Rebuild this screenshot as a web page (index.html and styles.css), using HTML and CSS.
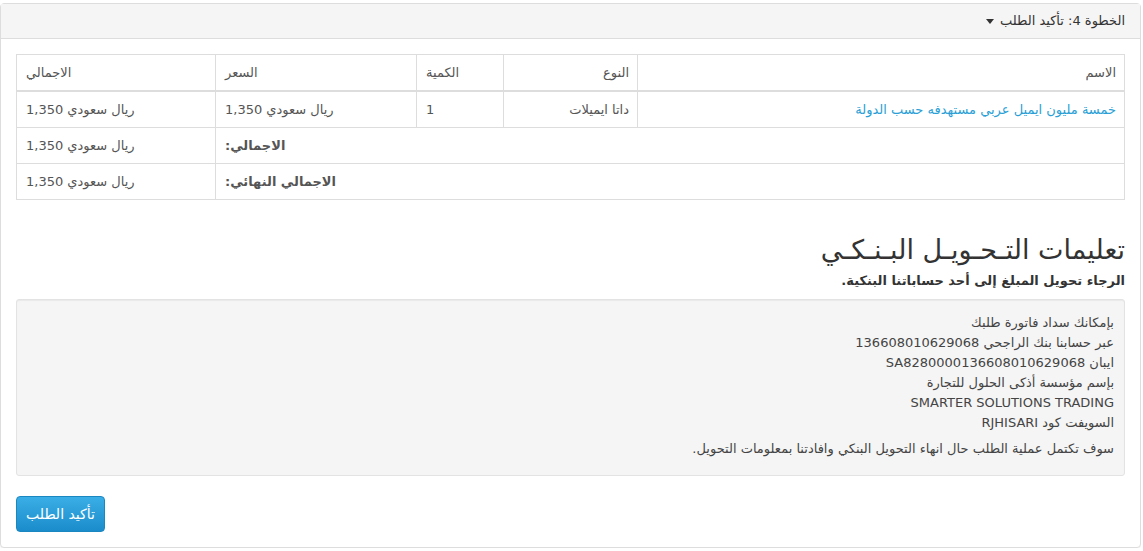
FILE: index.html
```html
<!DOCTYPE html>
<html lang="ar" dir="rtl">
<head>
    <meta charset="UTF-8">
    <meta name="viewport" content="width=device-width, initial-scale=1.0">
    <title>تأكيد الطلب</title>
    <link rel="stylesheet" href="styles.css">
</head>
<body>

    <div class="panel">
        <div class="panel-heading">
            الخطوة 4: تأكيد الطلب <span class="caret"></span>
        </div>
        <div class="panel-body">
            <table class="cart-table">
                <thead>
                    <tr>
                        <th class="col-name">الاسم</th>
                        <th class="col-type">النوع</th>
                        <th class="col-qty text-left">الكمية</th>
                        <th class="col-price text-left">السعر</th>
                        <th class="col-total text-left">الاجمالي</th>
                    </tr>
                </thead>
                <tbody>
                    <tr>
                        <td><a href="#">خمسة مليون ايميل عربي مستهدفه حسب الدولة</a></td>
                        <td>داتا ايميلات</td>
                        <td class="text-left">1</td>
                        <td class="text-left">ريال سعودي 1,350</td>
                        <td class="text-left">ريال سعودي 1,350</td>
                    </tr>
                    <tr>
                        <td colspan="4" class="text-left"><strong>الاجمالي:</strong></td>
                        <td class="text-left">ريال سعودي 1,350</td>
                    </tr>
                    <tr>
                        <td colspan="4" class="text-left"><strong>الاجمالي النهائي:</strong></td>
                        <td class="text-left">ريال سعودي 1,350</td>
                    </tr>
                </tbody>
            </table>

            <h2 class="bank-title">تعليمات التـحـويـل البـنـكـي</h2>
            <p class="bank-note">الرجاء تحويل المبلغ إلى أحد حساباتنا البنكية.</p>

            <div class="well">
                <p class="bank-lines">
                    بإمكانك سداد فاتورة طلبك<br>
                    عبر حسابنا بنك الراجحي 136608010629068<br>
                    ايبان SA8280000136608010629068<br>
                    بإسم مؤسسة أذكى الحلول للتجارة<br>
                    SMARTER SOLUTIONS TRADING<br>
                    السويفت كود RJHISARI
                </p>
                <p>سوف تكتمل عملية الطلب حال انهاء التحويل البنكي وافادتنا بمعلومات التحويل.</p>
            </div>

            <div class="actions">
                <button class="btn-primary" onclick="confirmOrder()">تأكيد الطلب</button>
            </div>
        </div>
    </div>

    <script>
        function confirmOrder() {
            window.location.href = '#';  // إرسال الطلب
        }
    </script>

</body>
</html>
```

FILE: styles.css
```css
        body {
            font-family: Tahoma, "DejaVu Sans", sans-serif;
            font-size: 13px;
            line-height: 1.428571;
            color: #555;
            background-color: #fff;
            margin: 3px 2px 0 0;
        }
        .panel {
            border: 1px solid #ddd;
            border-radius: 4px;
            box-shadow: 0 1px 1px rgba(0,0,0,0.05);
            background-color: #fff;
        }
        .panel-heading {
            background-color: #f5f5f5;
            border-bottom: 1px solid #ddd;
            padding: 7px 15px 7px;
            height: 20px;
            line-height: 20px;
            color: #333;
        }
        .caret {
            display: inline-block;
            width: 0;
            height: 0;
            margin-right: 2px;
            vertical-align: middle;
            border-top: 5px solid #333;
            border-left: 4px solid transparent;
            border-right: 4px solid transparent;
        }
        .panel-body {
            padding: 15px;
        }
        .cart-table {
            width: 100%;
            border-collapse: collapse;
            margin-bottom: 20px;
        }
        .cart-table th,
        .cart-table td {
            border: 1px solid #ddd;
            padding: 8px 8px 8px 9px;
            line-height: 19px;
            text-align: right;
            font-weight: normal;
            vertical-align: top;
        }
        .cart-table thead th {
            border-bottom: 2px solid #ddd;
        }
        .cart-table .text-left {
            text-align: left;
        }
        .cart-table strong {
            color: #555;
        }
        .col-type { width: 116px; }
        .col-qty { width: 69px; }
        .col-price { width: 183px; }
        .col-total { width: 181px; }
        .cart-table a {
            color: #2a9fd6;
            text-decoration: none;
        }
        .bank-title {
            font-size: 27px;
            font-weight: normal;
            line-height: 30px;
            color: #333;
            margin: 35px 0 7px;
        }
        .bank-note {
            font-weight: bold;
            color: #333;
            margin: 0 0 8px;
        }
        .well {
            background-color: #f5f5f5;
            border: 1px solid #e3e3e3;
            border-radius: 3px;
            box-shadow: inset 0 1px 1px rgba(0,0,0,0.05);
            padding: 13px 10px 16px;
            margin-bottom: 20px;
            line-height: 20px;
            color: #444;
        }
        .well p {
            margin: 0;
        }
        .well .bank-lines {
            margin-bottom: 6px;
        }
        .actions {
            text-align: left;
        }
        .btn-primary {
            font-family: Tahoma, "DejaVu Sans", sans-serif;
            font-size: 14px;
            line-height: 20px;
            color: white;
            background-image: linear-gradient(#3aaee6, #1b8ccb);
            border: 1px solid #1a87c1;
            border-radius: 4px;
            padding: 7px 9px;
            height: 36px;
            cursor: pointer;
        }
        .btn-primary:hover {
            background-image: linear-gradient(#2a9fd6, #1a7fb5);
        }
```
